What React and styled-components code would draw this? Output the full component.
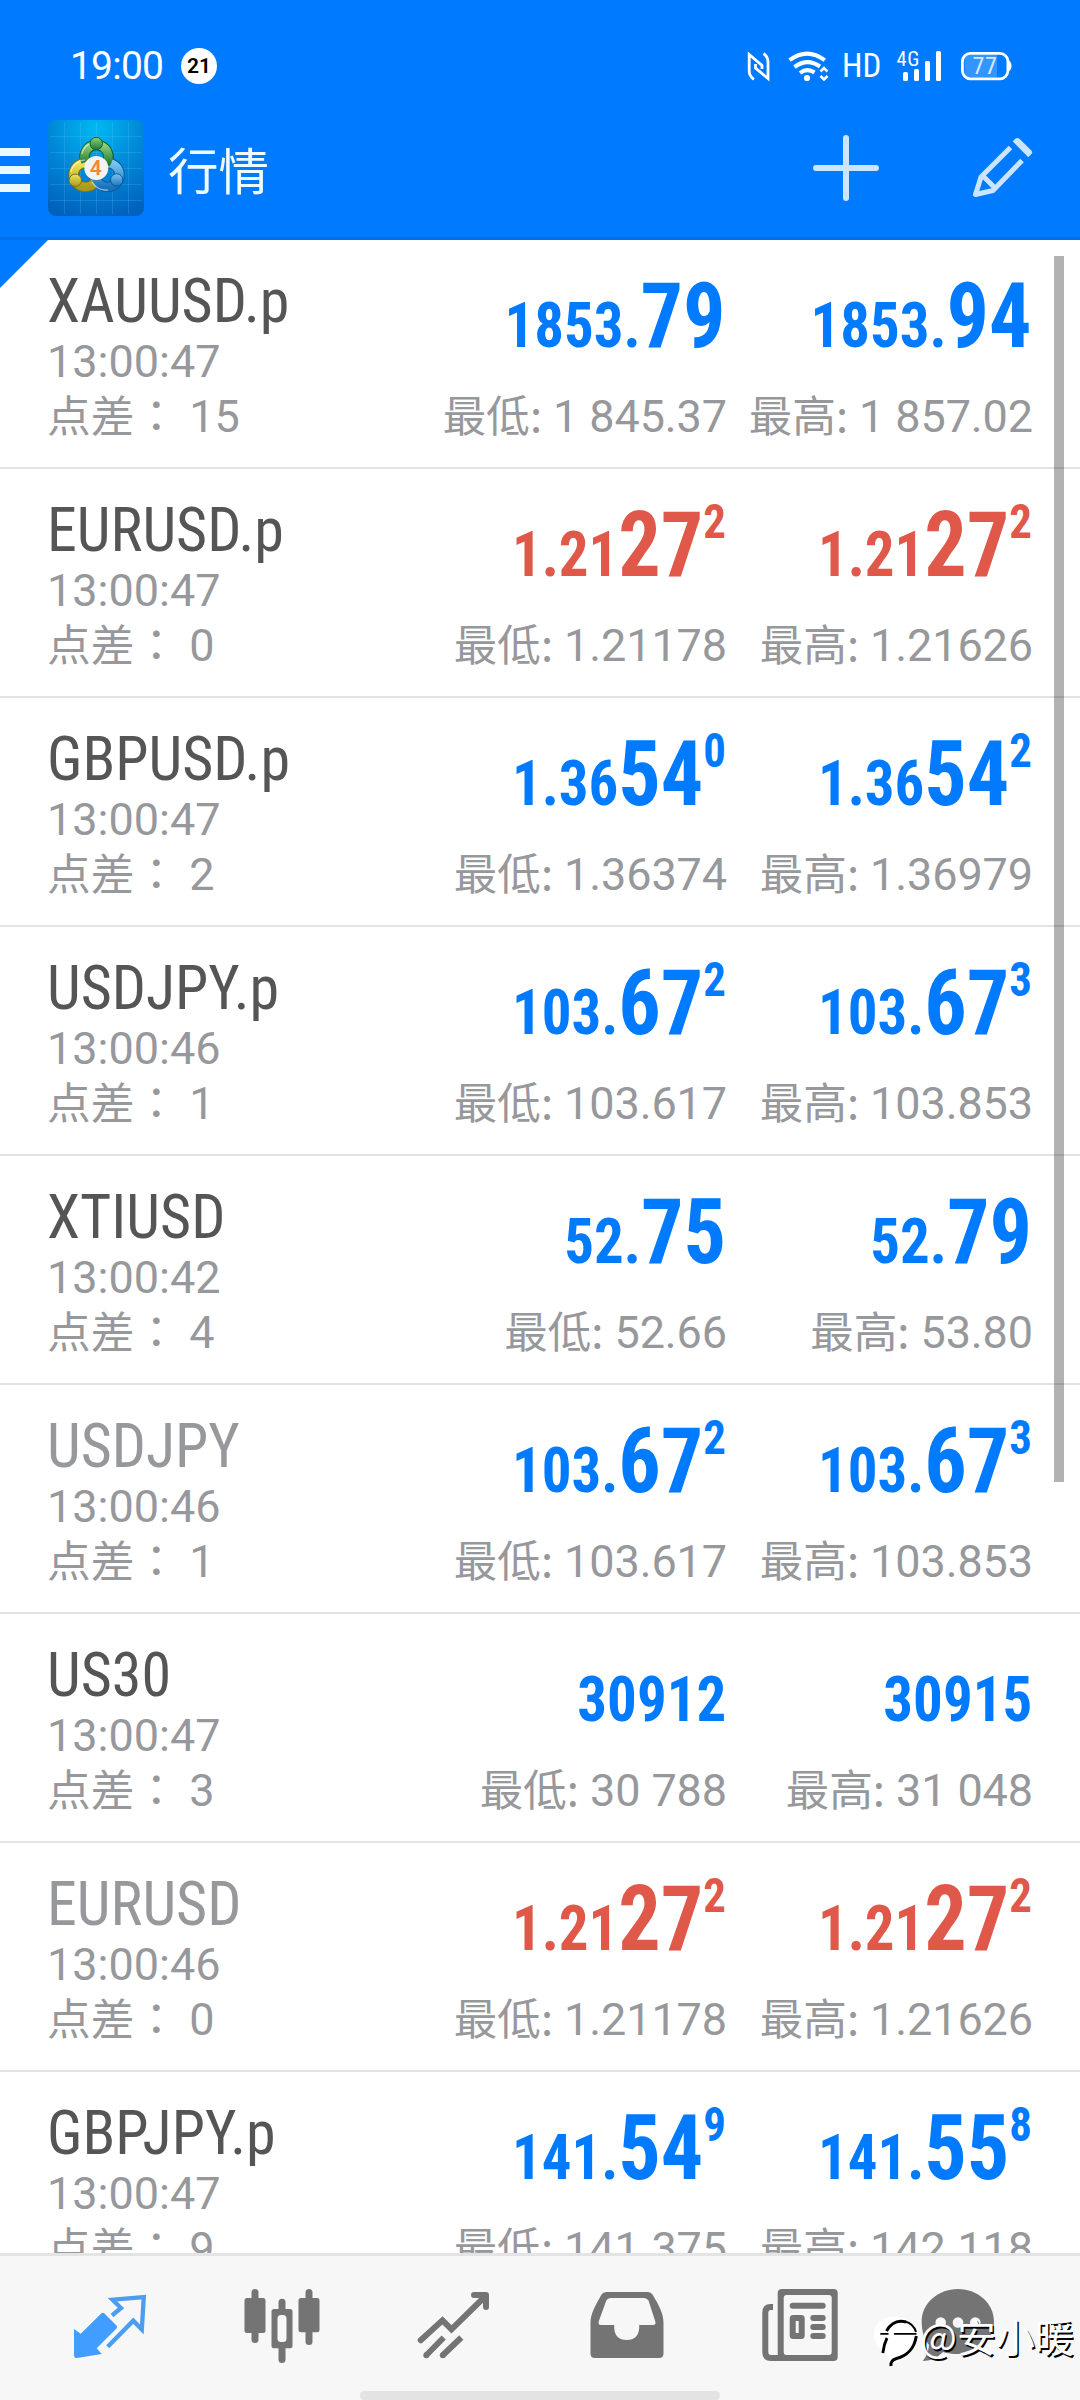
import React from "react";
import styled, { createGlobalStyle } from "styled-components";

const quotes = [
  { name: "XAUUSD.p", time: "13:00:47", spread: 15, bid: ["1853.", "79"], ask: ["1853.", "94"], low: "1 845.37", high: "1 857.02" },
  { name: "EURUSD.p", time: "13:00:47", spread: 0, down: true, bid: ["1.21", "27", "2"], ask: ["1.21", "27", "2"], low: "1.21178", high: "1.21626" },
  { name: "GBPUSD.p", time: "13:00:47", spread: 2, bid: ["1.36", "54", "0"], ask: ["1.36", "54", "2"], low: "1.36374", high: "1.36979" },
  { name: "USDJPY.p", time: "13:00:46", spread: 1, bid: ["103.", "67", "2"], ask: ["103.", "67", "3"], low: "103.617", high: "103.853" },
  { name: "XTIUSD", time: "13:00:42", spread: 4, bid: ["52.", "75"], ask: ["52.", "79"], low: "52.66", high: "53.80" },
  { name: "USDJPY", time: "13:00:46", spread: 1, muted: true, bid: ["103.", "67", "2"], ask: ["103.", "67", "3"], low: "103.617", high: "103.853" },
  { name: "US30", time: "13:00:47", spread: 3, bid: ["30912"], ask: ["30915"], low: "30 788", high: "31 048" },
  { name: "EURUSD", time: "13:00:46", spread: 0, muted: true, down: true, bid: ["1.21", "27", "2"], ask: ["1.21", "27", "2"], low: "1.21178", high: "1.21626" },
  { name: "GBPJPY.p", time: "13:00:47", spread: 9, bid: ["141.", "54", "9"], ask: ["141.", "55", "8"], low: "141.375", high: "142.118" },
];

const StatusIcons = () => (
  <Status>
    <svg width="24" height="36" viewBox="747 48 24 36" fill="none" stroke="#fff" strokeWidth="2.8">
      <path d="M754 79.3C750.5 77 749.2 74.500 749.2 71V54.500L762 65.500V69" />
      <path d="M763.500 53.500C767 56 768 58.500 768 62V78.500L755.500 68V64" />
    </svg>
    <svg width="42" height="36" viewBox="789 48 42 36" fill="none" stroke="#fff" strokeWidth="4">
      <path d="M790.500 60.200Q808 47 825.800 60.200" />
      <path d="M795.500 67.200Q808 57.500 821 66.500" />
      <path d="M801 73Q808 67.500 815.500 72.500" />
      <circle cx="808" cy="78" r="3.100" fill="#fff" stroke="none" />
      <path d="M821.500 71.500l3.500-3.500 3.500 3.500M821.500 76l3.500 3.500 3.500-3.500" strokeWidth="2.600" />
    </svg>
    <Hd>HD</Hd>
    <svg width="48" height="36" viewBox="896 48 48 36" fill="#fff">
      <text x="897.500" y="66" fontFamily="Roboto Condensed, sans-serif" fontSize="20.500" letterSpacing="0.600">4G</text>
      <rect x="904" y="72" width="5" height="9" rx="1.500" />
      <rect x="915" y="69" width="5" height="12" rx="1.500" />
      <rect x="926" y="61" width="5" height="20" rx="1.500" />
      <rect x="937" y="51" width="5" height="30" rx="1.500" />
    </svg>
    <svg width="52" height="36" viewBox="960 48 52 36">
      <path d="M970 55H997V77.500H970Q964.500 77.500 964.500 72V60.500Q964.500 55 970 55Z" fill="#3395ff" />
      <rect x="962.400" y="53.400" width="45.500" height="25.400" rx="8" fill="none" stroke="#fff" strokeWidth="2.800" />
      <path d="M1009 60.500Q1011.500 62 1011.500 66T1009 71Z" fill="#fff" />
      <text x="972.500" y="74" fill="#d5eaff" fontFamily="Roboto Condensed, sans-serif" fontSize="24" letterSpacing="0.600">77</text>
    </svg>
  </Status>
);

const AppLogo = () => (
  <Logo viewBox="0 0 96 96">
    <defs>
      <radialGradient id="tile" cx="0.5" cy="0.08" r="0.95">
        <stop offset="0" stopColor="#00b9f2" />
        <stop offset="0.5" stopColor="#0088d8" />
        <stop offset="1" stopColor="#0062bd" />
      </radialGradient>
      <linearGradient id="green" x2="0" y2="1">
        <stop offset="0" stopColor="#8fd07c" />
        <stop offset="1" stopColor="#1c7a35" />
      </linearGradient>
      <linearGradient id="yellow" x2="0" y2="1">
        <stop offset="0" stopColor="#f0e45a" />
        <stop offset="1" stopColor="#a99a1b" />
      </linearGradient>
      <linearGradient id="blue" x2="0" y2="1">
        <stop offset="0" stopColor="#7cc6f2" />
        <stop offset="1" stopColor="#1874bd" />
      </linearGradient>
    </defs>
    <rect width="96" height="96" rx="8" fill="url(#tile)" />
    <path
      d="M16.500 2V94M32.500 2V94M48.500 2V94M64.500 2V94M80.500 2V94M2 16.500H94M2 32.500H94M2 48.500H94M2 64.500H94M2 80.500H94"
      stroke="#7fd4ff"
      strokeOpacity="0.180"
    />
    <g fill="none" strokeWidth="10.500">
      <circle cx="48.500" cy="37" r="12" stroke="#14602c" />
      <circle cx="37.500" cy="55" r="12" stroke="#77701a" />
      <circle cx="59.500" cy="55" r="12" stroke="#12599a" />
    </g>
    <g fill="none" strokeWidth="8.500">
      <circle cx="37.500" cy="55" r="12" stroke="url(#yellow)" />
      <circle cx="59.500" cy="55" r="12" stroke="url(#blue)" />
      <path d="M37.500 42A12 12 0 1 1 58 44" stroke="url(#green)" />
    </g>
    <g fill="none" stroke="#fff" strokeOpacity="0.600" strokeWidth="1.200">
      <path d="M34 34A15.500 15.500 0 0 1 41 24" />
      <path d="M23 52A15 15 0 0 1 37 40" />
      <path d="M44 62A16 16 0 0 0 60 70" />
    </g>
    <circle cx="48.300" cy="23.500" r="6.200" fill="url(#green)" stroke="#14602c" />
    <circle cx="27.300" cy="60.300" r="6.200" fill="url(#yellow)" stroke="#77701a" />
    <circle cx="68.700" cy="60" r="6.200" fill="url(#blue)" stroke="#12599a" />
    <circle cx="48.300" cy="48" r="12" fill="#f3f3f3" />
    <text x="47.800" y="55.300" textAnchor="middle" fontFamily="Roboto, sans-serif" fontWeight="600" fontSize="21" fill="#f58634">
      4
    </text>
  </Logo>
);

const Price = ({ parts, down }) => (
  <PriceLine $down={down}>
    {parts[0]}
    {parts[1] && <Big>{parts[1]}</Big>}
    {parts[2] && <Pip>{parts[2]}</Pip>}
  </PriceLine>
);

const QuoteRow = ({ q }) => (
  <Row>
    <Info>
      <Symbol $muted={q.muted}>{q.name}</Symbol>
      <Small>{q.time}</Small>
      <Small>
        <Han>点差：</Han> {q.spread}
      </Small>
    </Info>
    <Side>
      <Price parts={q.bid} down={q.down} />
      <Range>
        <Han>最低:</Han> {q.low}
      </Range>
    </Side>
    <Side>
      <Price parts={q.ask} down={q.down} />
      <Range>
        <Han>最高:</Han> {q.high}
      </Range>
    </Side>
  </Row>
);

const App = () => {
  return (
    <>
      <GlobalStyle />
      <Screen>
        <Header>
          <StatusBar>
            <Clock>19:00</Clock>
            <Count>21</Count>
            <StatusIcons />
          </StatusBar>
          <Toolbar>
            <Menu>
              <i />
              <i />
              <i />
            </Menu>
            <AppLogo />
            <Title>行情</Title>
            <Actions>
              <svg width="66" height="66" viewBox="0 0 66 66" fill="none" stroke="#cce5ff" strokeWidth="6" strokeLinecap="round">
                <path d="M33 3V63M3 33H63" />
              </svg>
              <svg width="62" height="62" viewBox="972 137 62 62">
                <path
                  d="M1010.500 147.500L981 177L975.500 194.500L993 190.500L1022 160.500M982.500 175.500L995 188"
                  fill="none"
                  stroke="#cce5ff"
                  strokeWidth="5"
                  strokeLinejoin="round"
                />
                <path d="M1012.700 141.500L1015.300 138.700Q1017.500 137 1020 139.300L1031.300 150.600Q1033 152.500 1031.500 154L1028.300 157.200Z" fill="#cce5ff" />
              </svg>
            </Actions>
          </Toolbar>
        </Header>

        <List>
          <Corner />
          {quotes.map((q) => (
            <QuoteRow key={q.name} q={q} />
          ))}
          <Scrollbar />
        </List>

        <Nav>
          <NavIcon viewBox="62 2280 96 90">
            <path
              d="M74 2329L80.700 2333.700L101.500 2313.300Q102.700 2312.200 104.200 2313.300L116.500 2325.500Q117.700 2327 116.700 2328.300L96.700 2348.300L101.700 2353.900L77 2358Q74 2358.300 74 2355.500Z"
              fill="#419dff"
            />
            <path
              d="M112 2315.500L121 2308L112.500 2299.700L143.800 2297L141.800 2329.500L133.300 2320.700L107.700 2346.700"
              fill="none"
              stroke="#4a9df0"
              strokeWidth="4.300"
            />
          </NavIcon>
          <NavIcon viewBox="234.5 2280 96 90">
            <rect x="251" y="2289" width="7" height="54" rx="3.500" />
            <rect x="244" y="2298" width="21" height="35" rx="2.500" />
            <rect x="278" y="2298.700" width="7" height="64.300" rx="3.500" />
            <rect x="271" y="2309" width="21" height="39.300" rx="2.500" />
            <rect x="277" y="2315" width="9" height="27" rx="3.500" fill="#f7f7f7" />
            <rect x="305" y="2289" width="7" height="56" rx="3.500" />
            <rect x="298" y="2298" width="21" height="34.300" rx="2.500" />
          </NavIcon>
          <NavIcon viewBox="407 2280 96 90">
            <g fill="none" stroke="#747474" strokeWidth="6">
              <path d="M420.700 2340.300L442.500 2320.300L451.500 2329.300L485 2296.500" strokeLinecap="round" />
              <path d="M474 2295H486V2307" strokeLinecap="round" strokeLinejoin="round" />
              <path d="M426.500 2355L443.700 2337.500M443 2355L461.300 2337.500" />
            </g>
            <circle cx="426.300" cy="2355.200" r="3" />
            <circle cx="442.800" cy="2355.200" r="3" />
          </NavIcon>
          <NavIcon viewBox="579.5 2280 96 90">
            <path
              fillRule="evenodd"
              d="M606 2292H647.500Q650.500 2292 652 2294.500C659 2306 663 2314 663 2323V2353.500Q663 2358 658.500 2358H594.500Q590 2358 590 2353.500V2323C590 2314 594.500 2306 601 2294.500Q602.500 2292 606 2292ZM610 2298Q607 2298 605.800 2300.500L598.200 2321.500Q597.500 2325 600.500 2325H613.700V2328Q614.500 2340 626.200 2340T638.700 2328V2325H652.500Q655.800 2325 654.800 2321.500L648 2300.500Q646.500 2298 643.500 2298Z"
            />
          </NavIcon>
          <NavIcon viewBox="752 2280 96 90">
            <path
              fillRule="evenodd"
              d="M782 2289H833.500Q837.700 2289 837.700 2293V2357Q837.700 2361 833.500 2361H777.700V2293Q777.700 2289 782 2289ZM786.700 2295Q783.700 2295 783.700 2298V2352Q783.700 2355 786.700 2355H828.700Q831.700 2355 831.700 2352V2298Q831.700 2295 828.700 2295Z"
            />
            <path d="M773 2307H770.500Q765.300 2307 765.300 2312.500V2352Q765.300 2358 771 2358H780" fill="none" stroke="#747474" strokeWidth="6" />
            <path d="M792.700 2305.800H822.700M813.300 2318H822.700M813.300 2327H822.700M813.300 2336H822.700" stroke="#747474" strokeWidth="6" strokeLinecap="round" />
            <rect x="792.700" y="2318" width="9" height="18" rx="0.500" fill="none" stroke="#747474" strokeWidth="6" strokeLinejoin="round" />
          </NavIcon>
          <NavIcon $last viewBox="910 2280 96 90">
            <path d="M958 2289C978 2289 994 2303.500 994 2321.500C994 2340 978 2354 958 2354C952 2354 948 2353.500 943 2352Q934 2361 922.700 2361Q928.500 2354 929 2345C924 2339.500 921.700 2331 921.700 2321.500C921.700 2303.500 938 2289 958 2289Z" />
            <g fill="#f7f7f7">
              <circle cx="940.700" cy="2322.500" r="5.300" />
              <circle cx="958" cy="2322.500" r="5.300" />
              <circle cx="975.300" cy="2322.500" r="5.300" />
            </g>
          </NavIcon>
          <HomeHandle />
        </Nav>

        <Watermark>
          <svg width="48" height="56" viewBox="872 2314 48 56" fill="none">
            <path d="M891 2317C880 2318 874 2325 874 2334C874 2343 879 2350 885 2352L891 2366C905 2360 917 2350 917 2334C917 2323 903 2315 891 2317Z" fill="#fff" />
            <g stroke="#000">
              <path d="M882.800 2353C883.500 2347 885 2342 887 2338" strokeWidth="2.800" />
              <path d="M886.500 2331C891 2323 897 2319.500 906 2322" strokeWidth="3" />
              <path d="M880.300 2333.800H888.500M894 2333.800H916.500" strokeWidth="1.800" />
              <path d="M905 2321.500C911 2323 914.500 2327 916 2332" strokeWidth="2" />
              <path d="M916.300 2336C914.500 2348 907 2356 896.500 2358.500Q890 2360.500 891 2366" strokeWidth="3" />
            </g>
          </svg>
          <span>@安小暖</span>
        </Watermark>
      </Screen>
    </>
  );
};

export default App;

const GlobalStyle = createGlobalStyle`
  * {
    box-sizing: border-box;
  }

  body {
    margin: 0;
    font-family: Roboto, "Noto Sans CJK SC", sans-serif;
  }

  svg {
    display: block;
    flex-shrink: 0;
  }
`;

const Screen = styled.div`
  position: relative;
  display: flex;
  flex-direction: column;
  width: 1080px;
  height: 2400px;
  overflow: hidden;
  background-color: #fff;
`;

const Header = styled.div`
  flex-shrink: 0;
  height: 240px;
  padding-top: 48px;
  background-color: #007aff;
  border-bottom: 3px solid #006ee6;
`;

const StatusBar = styled.div`
  display: flex;
  align-items: center;
  height: 36px;
  padding: 0 68px 0 70px;
  color: #fff;
`;

const Clock = styled.div`
  width: 111px;
  font-size: 39px;
  line-height: 36px;
  letter-spacing: -0.8px;
`;

const Count = styled.div`
  display: flex;
  align-items: center;
  justify-content: center;
  width: 36px;
  height: 36px;
  border-radius: 50%;
  background-color: #fff;
  color: #000;
  font-size: 21px;
  font-weight: 600;
`;

const Status = styled.div`
  display: flex;
  align-items: center;
  margin-left: auto;

  svg + svg {
    margin-left: 17px;
  }
`;

const Hd = styled.div`
  width: 38px;
  margin: 0 15px 0 12px;
  font-family: "Roboto Condensed", sans-serif;
  font-size: 33px;
  line-height: 36px;
`;

const Toolbar = styled.div`
  display: flex;
  align-items: center;
  height: 96px;
  margin-top: 36px;
`;

const Menu = styled.div`
  display: flex;
  flex-direction: column;
  gap: 10px;
  width: 30px;
  margin: 4px 18px 0 0;

  i {
    height: 8px;
    background-color: #ebf8ff;
  }
`;

const Logo = styled.svg`
  width: 96px;
  height: 96px;
`;

const Title = styled.div`
  margin-left: 24px;
  color: #effbff;
  font-family: "Noto Sans CJK SC", sans-serif;
  font-size: 50.5px;
  line-height: 94px;
`;

const Actions = styled.div`
  display: flex;
  align-items: center;
  gap: 93px;
  margin: 0 46px 0 auto;
`;

const List = styled.div`
  position: relative;
  flex: 1;
  overflow: hidden;
`;

const Corner = styled.div`
  position: absolute;
  top: 0;
  left: 0;
  width: 48px;
  height: 48px;
  background-color: #007aff;
  clip-path: polygon(0 0, 100% 0, 0 100%);
`;

const Scrollbar = styled.div`
  position: absolute;
  top: 16px;
  right: 16px;
  width: 10px;
  height: 1226px;
  background-color: rgba(0, 0, 0, 0.3);
`;

const Row = styled.div`
  display: flex;
  height: 229px;
  padding: 28px 48px 0 47px;
  border-bottom: 2px solid #e3e3e3;
  white-space: nowrap;
`;

const Info = styled.div`
  flex: 1;
`;

const Symbol = styled.div`
  color: ${(props) => (props.$muted ? "#97989b" : "#555")};
  font-family: "Roboto Condensed", Roboto, sans-serif;
  font-size: 62px;
  line-height: 66px;
  transform: scaleX(0.968);
  transform-origin: left;
`;

const Small = styled.div`
  color: #97989b;
  font-size: 45px;
  line-height: 55px;
`;

const Han = styled.span`
  font-family: "Noto Sans CJK TC", sans-serif;
  font-size: 43.7px;
  line-height: 0;
`;

const Side = styled.div`
  width: 306px;
  display: flex;
  flex-direction: column;
  align-items: flex-end;
`;

const PriceLine = styled.div`
  color: ${(props) => (props.$down ? "#df5849" : "#007aff")};
  font-family: "Roboto Condensed", Roboto, sans-serif;
  font-weight: 700;
  font-size: 63px;
  line-height: 115px;
  transform: scaleX(0.935);
  transform-origin: right;
`;

const Big = styled.span`
  font-size: 90px;
  line-height: 0;
`;

const Pip = styled.span`
  font-size: 48px;
  line-height: 0;
  vertical-align: 38px;
`;

const Range = styled.div`
  margin-right: -1px;
  color: #97989b;
  font-size: 45px;
  line-height: 67px;
  letter-spacing: -0.1px;
`;

const Nav = styled.div`
  position: relative;
  display: flex;
  flex-shrink: 0;
  gap: 76.5px;
  height: 147px;
  padding: 24px 0 0 62px;
  background-color: #f7f7f7;
  border-top: 3px solid #e4e4e4;
`;

const NavIcon = styled.svg`
  width: 96px;
  height: 90px;
  margin-left: ${(props) => (props.$last ? "-14.5px" : "0")};
  fill: #747474;
`;

const HomeHandle = styled.div`
  position: absolute;
  bottom: 0;
  left: 360px;
  width: 360px;
  height: 9px;
  border-radius: 5px;
  background-color: #e3e3e3;
`;

const Watermark = styled.div`
  position: absolute;
  right: 6px;
  bottom: 30px;
  display: flex;
  align-items: flex-start;

  span {
    color: #fff;
    font-family: "Noto Sans CJK SC", sans-serif;
    font-size: 39px;
    line-height: 43px;
    text-shadow: 1.5px 1.5px 0 #000;
  }
`;
